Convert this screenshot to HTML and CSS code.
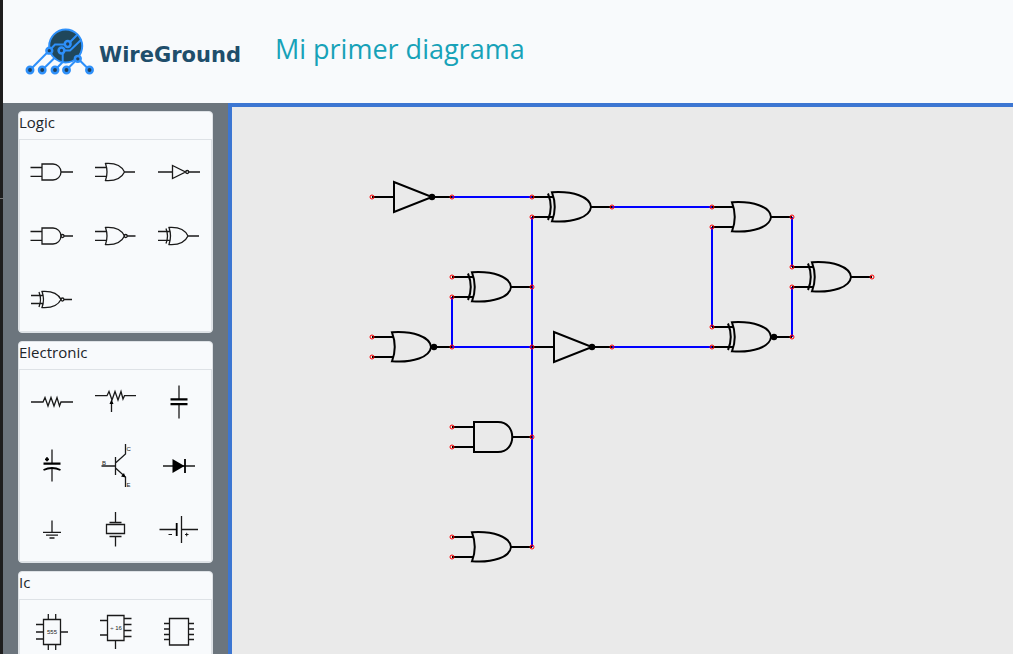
FILE: index.html
```html
<!DOCTYPE html>
<html lang="es">
<head>
<meta charset="utf-8">
<meta name="viewport" content="width=device-width, initial-scale=1">
<title>WireGround</title>
<link rel="stylesheet" href="styles.css">
</head>
<body>
<header class="topbar">
  <a class="brand" href="#">
    <svg class="brand-mark" viewBox="24 26 72 50" aria-hidden="true">
      <circle class="logo-disc" cx="65.7" cy="45" r="16.5"/>
      <path class="logo-line" d="M30 69L49.3 49.5L55 43.5H67.7L77.5 33.5M42.2 69L55 56.5M55 69L62.7 61V49.5H70L81.5 38.5M66.5 69L77.8 57.5L89.5 69"/>
      <g class="logo-node">
        <circle cx="30" cy="69" r="3.2"/><circle cx="42.2" cy="69" r="3.2"/><circle cx="55" cy="69" r="3.2"/><circle cx="66.5" cy="69" r="3.2"/><circle cx="89.5" cy="69" r="3.2"/>
        <circle cx="49.3" cy="49.7" r="2.9"/><circle cx="67.7" cy="43" r="2.9"/><circle cx="61.5" cy="49.5" r="2.9"/><circle cx="77.8" cy="57.8" r="2.9"/>
      </g>
    </svg>
    <span class="brand-name">WireGround</span>
  </a>
  <h1 class="diagram-title">Mi primer diagrama</h1>
</header>
<main class="workspace">
  <aside class="sidebar">
    <section class="card">
      <h2 class="card-title">Logic</h2>
      <div class="tools">
        <button class="tool" aria-label="AND"><svg viewBox="0 0 64 64"><path d="M11.5 27.5H23M11.5 36.3H23M42 32H54M23 24V40H34A8 8 0 0 0 34 24Z"/></svg></button>
        <button class="tool" aria-label="OR"><svg viewBox="0 0 64 64"><path d="M12 27.5H24M12 36.3H24M41.5 32H52M22.5 23.5Q25.5 32 22.5 40.5Q37 41.5 41.5 32Q37 22.5 22.5 23.5Z"/></svg></button>
        <button class="tool" aria-label="NOT"><svg viewBox="0 0 64 64"><path d="M11 32H25.5M42 32H53M25.5 25.5V38.5L38.5 32Z"/><circle cx="40.2" cy="32" r="1.5"/></svg></button>
        <button class="tool" aria-label="NAND"><svg viewBox="0 0 64 64"><path d="M11.5 27.5H23M11.5 36.3H23M45 32H54M23 24V40H34A8 8 0 0 0 34 24Z"/><circle cx="43.5" cy="32" r="1.5"/></svg></button>
        <button class="tool" aria-label="NOR"><svg viewBox="0 0 64 64"><path d="M12 27.5H24M12 36.3H24M44 32H52.5M22.5 23.5Q25.5 32 22.5 40.5Q37 41.5 41.5 32Q37 22.5 22.5 23.5Z"/><circle cx="42.7" cy="32" r="1.5"/></svg></button>
        <button class="tool" aria-label="XOR"><svg viewBox="0 0 64 64"><path d="M11 27.5H23M11 36.3H23M41 32H52M22 23.5Q25 32 22 40.5Q36.5 41.5 41 32Q36.5 22.5 22 23.5ZM19 24.5Q22 32 19 39.5"/></svg></button>
        <button class="tool" aria-label="XNOR"><svg viewBox="0 0 64 64"><path d="M12 27.5H24M12 35.5H24M45 31.5H53M23 23.5Q26 31.5 23 39.5Q37.5 40.5 42 31.5Q37.5 22.5 23 23.5ZM20 24Q23 31.5 20 39"/><circle cx="43.4" cy="31.5" r="1.5"/></svg></button>
      </div>
    </section>
    <section class="card">
      <h2 class="card-title">Electronic</h2>
      <div class="tools">
        <button class="tool" aria-label="Resistor"><svg viewBox="0 0 64 64"><path d="M12 32H24L26 27.5L29 36L32 27.5L35 36L38 27.5L40.5 36L42 32H54"/></svg></button>
        <button class="tool" aria-label="Potentiometer"><svg viewBox="0 0 64 64"><path d="M12 25.7H24L26 21.5L29 30L32 21.5L35 30L38 21.5L40 29L41.5 25.7H53M28.5 32V42"/><path class="solid" d="M28.5 29.5L30.5 34H26.5Z"/></svg></button>
        <button class="tool" aria-label="Capacitor"><svg viewBox="0 0 64 64"><path d="M32 15.5V29M32 34V48.500"/><path class="thick" d="M23.5 29.3H40.5M23.5 34.2H40.5"/></svg></button>
        <button class="tool" aria-label="Polarized capacitor"><svg viewBox="0 0 64 64"><path d="M33 15.5V30M33 34V47.5"/><path class="thick" d="M24.5 29.7H41.5"/><path class="bold" d="M24.5 36Q33 32 41.5 36M26 25.3H30M28 23.3V27.3"/></svg></button>
        <button class="tool" aria-label="Transistor"><svg viewBox="0 0 64 64"><path d="M18.5 32H32.5M32.5 23V41M32.5 29L42.5 20V10M32.5 34L42.5 43V53"/><path class="solid" d="M42.5 43.5L38 42.5L41 39Z"/><text x="43.5" y="17">C</text><text x="19" y="31">B</text><text x="43.5" y="53">E</text></svg></button>
        <button class="tool" aria-label="Diode"><svg viewBox="0 0 64 64"><path d="M16 32H48"/><path class="solid" d="M25.5 25V39L37.5 32Z"/><path class="bold" d="M38 25V39"/></svg></button>
        <button class="tool" aria-label="Ground"><svg viewBox="0 0 64 64"><path d="M33 22.5V34M24 34.3H42M27 37.2H39M30.5 40H35.5"/></svg></button>
        <button class="tool" aria-label="Crystal"><svg viewBox="0 0 64 64"><path d="M32.5 14V24.5M26.5 24.5H38.5M32.5 48.5V38.5M26.5 38.5H38.5M23.5 26.5H41.5V35.5H23.5Z"/></svg></button>
        <button class="tool" aria-label="Battery"><svg viewBox="0 0 64 64"><path d="M12.5 31.5H29M34.5 31.5H51M34.5 18V45"/><path class="thin" d="M21.5 36.5H25M38 36.5H41.5M39.7 34.8V38.3"/><path class="bold" d="M29.7 25V38"/></svg></button>
      </div>
    </section>
    <section class="card">
      <h2 class="card-title">Ic</h2>
      <div class="tools">
        <button class="tool" aria-label="Timer 555"><svg viewBox="0 0 64 64"><path d="M24.5 19.5H41.5V44.5H24.5ZM17 24.5H24.5M17 32H24.5M17 39H24.5M41.5 32H49M29.3 14V19.5M36.7 14V19.5M29.3 44.5V50M36.7 44.5V50"/><text x="33" y="34" text-anchor="middle">555</text></svg></button>
        <button class="tool" aria-label="Divider"><svg viewBox="0 0 64 64"><path d="M24.5 15.5H41V40.5H24.5ZM17 20.5H24.5M17 35H24.5M41 18.5H48.5M41 24.5H48.5M41 30.5H48.5M41 36.5H48.5M32.5 40.5V49"/><text x="33" y="30" text-anchor="middle">÷ 16</text></svg></button>
        <button class="tool" aria-label="Chip"><svg viewBox="0 0 64 64"><path d="M22.5 18.5H41.5V45H22.5ZM17 23.5H22.5M17 29H22.5M17 34.5H22.5M17 39.5H22.5M41.5 23.5H47M41.5 29H47M41.5 34.5H47M41.5 39.5H47"/></svg></button>
      </div>
    </section>
  </aside>
  <div class="board">
    <svg class="diagram" role="img" aria-label="Mi primer diagrama">
      <defs>
        <circle id="pin" r="2"/>
        <g id="pins-in"><use href="#pin" y="-10"/><use href="#pin" y="10"/></g>
        <g id="body-or"><path d="M0 -10H22M0 10H22M59.5 0H80M20 -14.7Q25.500 0 20 14.3C41 16 58 10 59 0C58 -10.500 41 -16 20 -14.7Z"/></g>
        <g id="or"><use href="#body-or"/><g class="pin"><use href="#pins-in"/><use href="#pin" x="80"/></g></g>
        <g id="nor"><use href="#body-or"/><circle class="dot" cx="62" r="3.2"/><g class="pin"><use href="#pins-in"/><use href="#pin" x="80"/></g></g>
        <g id="xor"><path d="M16 -13.5Q21.5 0 16 13"/><use href="#or"/></g>
        <g id="xnor"><path d="M16 -13.5Q21.5 0 16 13"/><use href="#nor"/></g>
        <g id="and"><path d="M0 -10H22M0 10H22M60 0H80M22 -15V15H46C65 15 65 -15 46 -15Z"/><g class="pin"><use href="#pins-in"/><use href="#pin" x="80"/></g></g>
        <g id="not"><path d="M0 0H22M60 0H80M22 -15V15L60 0Z"/><circle class="dot" cx="60" r="3.2"/><g class="pin"><use href="#pin"/><use href="#pin" x="80"/></g></g>
      </defs>
      <g transform="translate(-232 -107)">
        <path class="wire" d="M452 197H532M532 217V547M452 297V347H532M612 207H712M712 227V327M612 347H712M792 217V267M792 287V337"/>
        <g class="gates">
          <use href="#not" x="372" y="197"/>
          <use href="#xor" x="532" y="207"/>
          <use href="#xor" x="452" y="287"/>
          <use href="#nor" x="372" y="347"/>
          <use href="#not" x="532" y="347"/>
          <use href="#and" x="452" y="437"/>
          <use href="#or" x="452" y="547"/>
          <use href="#or" x="712" y="217"/>
          <use href="#xor" x="792" y="277"/>
          <use href="#xnor" x="712" y="337"/>
        </g>
      </g>
    </svg>
  </div>
</main>
</body>
</html>
```
FILE: styles.css
```css
* { box-sizing: border-box; }

body {
  margin: 0;
  height: 100vh;
  display: flex;
  flex-direction: column;
  overflow: hidden;
  border-left: 3px solid #1e1e1e;
  background: #f8fafc;
  color: #212529;
  font: 15px/20px "Open Sans", "Noto Sans", sans-serif;
}

/* tick on the window edge */
body::before {
  content: "";
  position: absolute;
  left: 0;
  top: 198px;
  width: 3px;
  height: 1px;
  background: #777;
}

.topbar {
  flex: none;
  display: flex;
  align-items: center;
  gap: 34px;
  height: 103px;
  padding: 0 21px;
}

.brand {
  display: flex;
  align-items: center;
  gap: 3px;
  color: #1f4e6b;
  text-decoration: none;
}

.brand-mark { width: 72px; height: 50px; }
.logo-disc { fill: #1f475c; stroke: #2e90fa; stroke-width: 2; }
.logo-line { fill: none; stroke: #2e90fa; stroke-width: 2; }
.logo-node { fill: #1f3f5c; stroke: #2e90fa; stroke-width: 2.5; }

.brand-name {
  padding-top: 6px;
  font: bold 21px/24px "DejaVu Sans", sans-serif;
}

.diagram-title {
  margin: 0;
  padding-bottom: 6px;
  color: #17a2b8;
  font-size: 27px;
  font-weight: 400;
  line-height: 36px;
}

.workspace { flex: 1; min-height: 0; display: flex; }

.sidebar {
  flex: none;
  width: 225px;
  padding: 8px 15px;
  display: flex;
  flex-direction: column;
  gap: 8px;
  overflow: hidden;
  background: #6c757d;
}

.card {
  flex: none;
  overflow: hidden;
  border: 1px solid #dee2e6;
  border-radius: 4px;
  background: #f8fafc;
}

.card-title {
  margin: 0;
  height: 28px;
  border-bottom: 1px solid #dee2e6;
  font-size: 15px;
  font-weight: 400;
  line-height: 20px;
}

.tools {
  display: grid;
  grid-template-columns: repeat(3, 64px);
  grid-auto-rows: 64px;
  min-height: 192px;
  box-shadow: inset 1px 0 #dee2e6, inset -1px -1px #dee2e6;
}

.tool {
  padding: 0;
  border: 0;
  background: none;
  cursor: pointer;
}

.tool svg {
  display: block;
  width: 64px;
  height: 64px;
  fill: none;
  stroke: #1a1a1a;
  stroke-width: 1.3;
}

.tool .solid { fill: #000; stroke: none; }
.tool .thin { stroke-width: 1; }
.tool .bold { stroke: #000; stroke-width: 1.8; }
.tool .thick { stroke: #000; stroke-width: 2.2; }
.tool text { fill: #222; stroke: none; font: 6px "Liberation Sans", sans-serif; }

.board {
  flex: 1;
  min-width: 0;
  border-top: 4px solid #3c76d2;
  border-left: 4px solid #3c76d2;
  background: #eaeaea;
}

.diagram { display: block; width: 100%; height: 100%; }
.gates { fill: none; stroke: #000; stroke-width: 2; }
.wire { fill: none; stroke: #00f; stroke-width: 2; }
.dot { fill: #000; stroke: none; }
.pin { stroke: #f00; stroke-width: 1; }
```
